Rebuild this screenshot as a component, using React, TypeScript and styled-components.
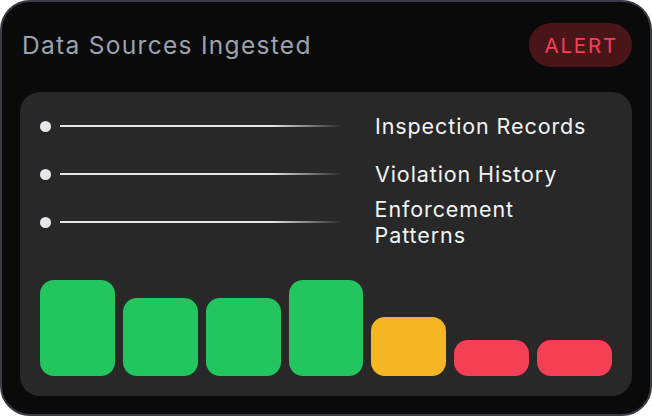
import React from "react";
import styled, { createGlobalStyle } from "styled-components";

const Global = createGlobalStyle`
  html, body { margin: 0; background: #ffffff; }
  * { box-sizing: border-box; }
`;

const Card = styled.div`
  width: 652px; height: 416px;
  background: #0a0a0a;
  border: 2px solid #3a3d45;
  border-radius: 30px;
  padding: 20px 18px 18px 18px;
  display: flex; flex-direction: column; gap: 24px;
  font-family: Inter, "Liberation Sans", sans-serif;
`;
const Header = styled.div`
  display: flex; justify-content: space-between; align-items: center;
  height: 46px;
`;
const Title = styled.div`
  color: #9ca3af; font-size: 24.5px; padding-left: 2px; letter-spacing: 1.3px;
`;
const Pill = styled.div`
  background: #4a1519; color: #f43f55; font-size: 20.5px; letter-spacing: 1.8px;
  height: 44px; padding: 0 14px 0 16px; border-radius: 22px;
  display: flex; align-items: center;
`;
const Panel = styled.div`
  flex: 1; background: #282828; border-radius: 20px;
  padding: 18px 20px 20px 20px;
  display: flex; flex-direction: column;
`;
const Rows = styled.div`
  display: flex; flex-direction: column; gap: 16px;
`;
const Row = styled.div`
  display: flex; align-items: center; height: 32px;
`;
const Dot = styled.div`
  width: 11px; height: 11px; border-radius: 50%; background: #e5e7eb;
`;
const Line = styled.div`
  width: 282px; height: 2px; margin-left: 9px;
  background: linear-gradient(to right, #e5e7eb 0%, #e5e7eb 75%, rgba(229,231,235,0.4) 90%, rgba(229,231,235,0) 100%);
`;
const Label = styled.div`
  margin-left: 33px; color: #f3f4f6; font-size: 21.5px; letter-spacing: 0.9px;
`;
const Bars = styled.div`
  margin-top: auto; display: flex; align-items: flex-end; gap: 8px; height: 100px;
`;
const Bar = styled.div<{ $h: number; $c: string }>`
  width: 75px; height: ${p => p.$h}px; background: ${p => p.$c};
  border-radius: 14px;
`;

const G = "#22c55e", Y = "#f6b623", R = "#f43f55";
const bars: [number, string][] = [[96, G], [78, G], [78, G], [96, G], [59, Y], [36, R], [36, R]];

export default function App() {
  return (
    <>
      <Global />
      <Card>
        <Header>
          <Title>Data Sources Ingested</Title>
          <Pill>ALERT</Pill>
        </Header>
        <Panel>
          <Rows>
            {["Inspection Records", "Violation History", "Enforcement Patterns"].map(t => (
              <Row key={t}><Dot /><Line /><Label>{t}</Label></Row>
            ))}
          </Rows>
          <Bars>
            {bars.map(([h, c], i) => <Bar key={i} $h={h} $c={c} />)}
          </Bars>
        </Panel>
      </Card>
    </>
  );
}
